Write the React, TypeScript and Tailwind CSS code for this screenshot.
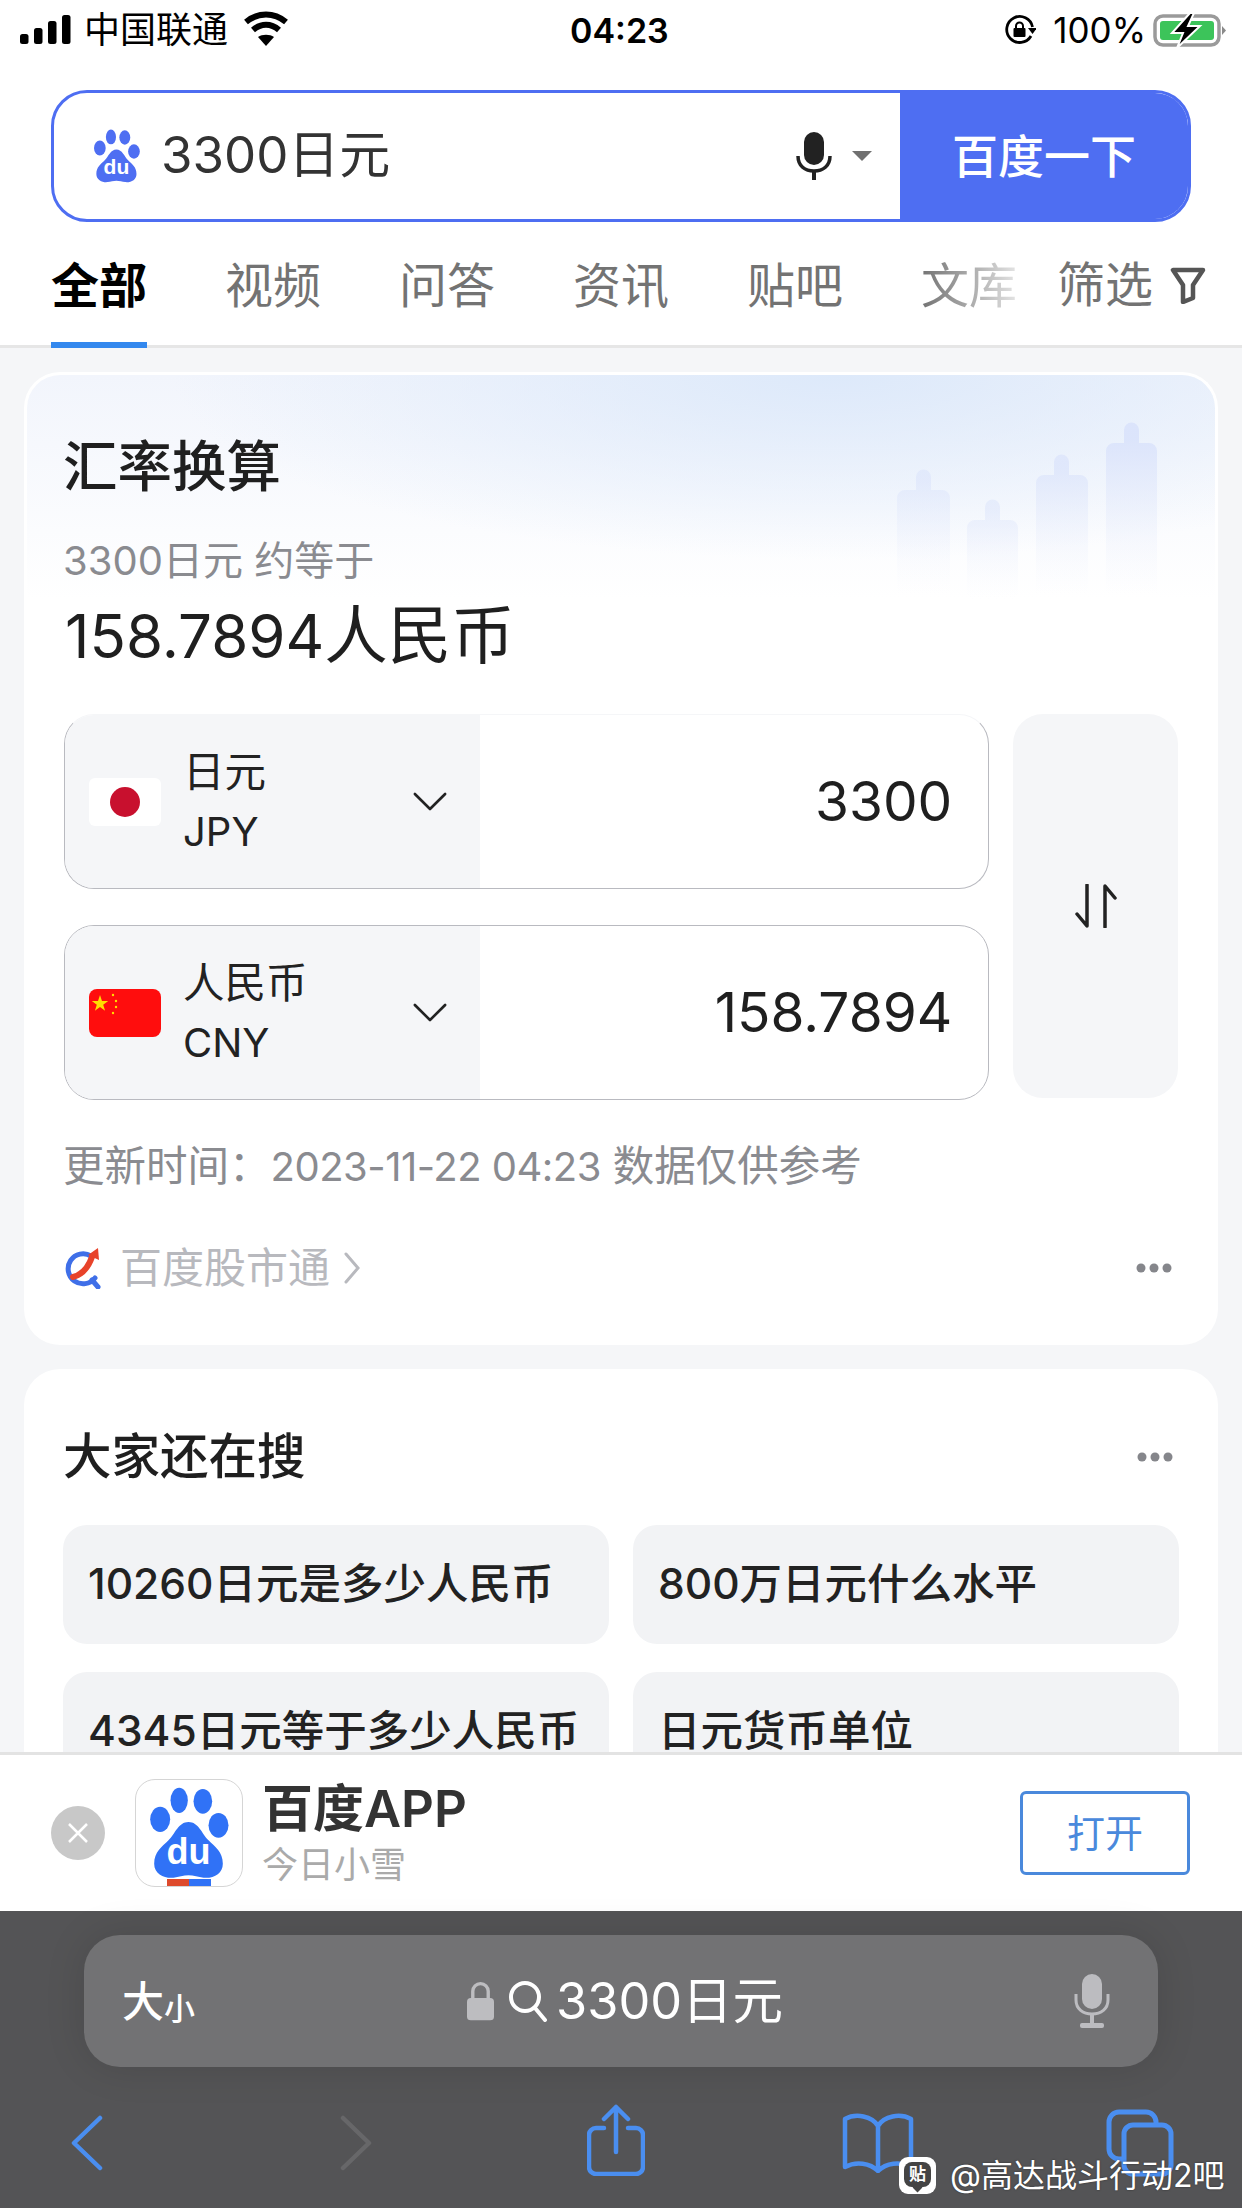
import React from "react";

function Paw({ className, textColor = "#fff" }: { className?: string; textColor?: string }) {
  return (
    <svg viewBox="0 0 236 276" className={className}>
      <g fill="currentColor">
        <ellipse cx="87" cy="40" rx="26" ry="38" />
        <ellipse cx="158" cy="43" rx="28" ry="37" />
        <ellipse cx="30" cy="97" rx="30" ry="38" />
        <ellipse cx="205" cy="115" rx="30" ry="37" />
        <path d="M115 105C85 105 75 140 55 160C35 180 12 195 12 230C12 262 45 275 70 272C85 270 100 265 115 265C130 265 145 270 160 272C190 275 218 260 218 230C218 195 195 180 175 160C155 140 145 105 115 105Z" />
      </g>
      <text x="115" y="232" textAnchor="middle" fontFamily="'Liberation Sans',sans-serif" fontWeight="700" fontSize="108" fill={textColor}>du</text>
    </svg>
  );
}

function Chevron({ className }: { className?: string }) {
  return (
    <svg viewBox="0 0 36 20" className={className} fill="none" stroke="currentColor" strokeWidth="2.800" strokeLinecap="round" strokeLinejoin="round">
      <path d="M2 2l16 16L34 2" />
    </svg>
  );
}

function Dots({ className }: { className?: string }) {
  return (
    <svg viewBox="0 0 36 10" className={`w-[36px] h-[10px] ${className ?? ""}`} fill="#85868b">
      <circle cx="5" cy="5" r="4.500" />
      <circle cx="18" cy="5" r="4.500" />
      <circle cx="31" cy="5" r="4.500" />
    </svg>
  );
}

function StatusBar() {
  return (
    <div className="h-[60px] shrink-0 flex items-center justify-between pl-[20px] pr-[15px] relative text-black">
      <div className="flex items-center">
        <svg viewBox="0 0 52 30" className="w-[52px] h-[30px]" fill="#000">
          <rect x="0" y="19" width="8.500" height="10" rx="2.500" />
          <rect x="14" y="13" width="8.500" height="16" rx="2.500" />
          <rect x="28" y="6" width="8.500" height="23" rx="2.500" />
          <rect x="42" y="0" width="8.500" height="29" rx="2.500" />
        </svg>
        <span className="text-[36px] leading-none ml-[12px]">中国联通</span>
        <svg viewBox="0 0 46 36" className="w-[46px] h-[36px] ml-[15px] -mt-[2px]" fill="none" stroke="#000" strokeWidth="6">
          <path d="M3 11c12-10 28-10 40 0" />
          <path d="M10 19c8-7 18-7 26 0" />
          <path d="M23 35l-8-9c4-3 12-3 16 0z" fill="#000" strokeWidth="0" />
        </svg>
      </div>
      <span className="absolute left-[570px] top-[13px] text-[34px] leading-[36px] font-semibold">04:23</span>
      <div className="flex items-center">
        <svg viewBox="0 0 32 32" className="w-[32px] h-[32px] -translate-x-[2px]" fill="none" stroke="#000" strokeWidth="2.800">
          <path d="M27 22A13 13 0 1 1 28.500 13" />
          <path d="M24 14h9l-4.500 6z" fill="#000" strokeWidth="0" />
          <rect x="9.500" y="14" width="12" height="9" rx="1" fill="#000" strokeWidth="0" />
          <path d="M12 14v-2a3.500 3.500 0 0 1 7 0v2" strokeWidth="2" />
        </svg>
        <span className="text-[35px] leading-none ml-[15px]">100%</span>
        <svg viewBox="0 0 74 36" className="w-[74px] h-[36px] ml-[7px]">
          <rect x="2" y="4" width="64" height="29" rx="8" fill="none" stroke="#9a9a9a" strokeWidth="3.500" />
          <rect x="7" y="9" width="54" height="19" rx="3" fill="#3cc45a" />
          <path d="M69 14l4 4.500-4 4.500z" fill="#8a8a8a" />
          <path d="M37 1L19 21h11L24 36l23-22H35l6-13z" fill="#000" stroke="#fff" strokeWidth="2" />
        </svg>
      </div>
    </div>
  );
}

function SearchBox() {
  return (
    <div className="mt-[30px] mx-[51px] h-[132px] shrink-0 flex rounded-[36px] border-[3px] border-[#4e6ef2] overflow-hidden bg-white">
      <div className="flex-1 flex items-center pl-[40px] pr-[28px]">
        <Paw className="w-[46px] h-[54px] text-[#4e6ef2]" />
        <span className="ml-[21px] text-[51px] leading-none text-[#333] -translate-y-[2px]">3300日元</span>
        <div className="ml-auto flex items-center">
          <svg viewBox="0 0 36 48" className="w-[36px] h-[48px] -translate-x-[3px]">
            <rect x="8" y="0" width="20" height="33" rx="10" fill="#222" />
            <path d="M2 24c0 10 7 15 16 15s16-5 16-15" fill="none" stroke="#222" strokeWidth="3.500" />
            <rect x="16" y="38" width="4" height="10" fill="#222" />
          </svg>
          <svg viewBox="0 0 20 10" className="w-[20px] h-[10px] ml-[17px]" fill="#707070">
            <path d="M0 0h20L10 10z" />
          </svg>
        </div>
      </div>
      <div className="w-[288px] bg-[#4e6ef2] flex items-center justify-center text-white text-[46px] font-medium leading-none">百度一下</div>
    </div>
  );
}

function Tabs() {
  const tabs = ["视频", "问答", "资讯", "贴吧"];
  return (
    <div className="h-[126px] shrink-0 bg-white relative border-b-[3px] border-[#e6e6e6] flex items-start pl-[51px] pt-[31px] text-[48px] leading-[66px] text-[#737373]">
      <div className="w-[96px] relative h-[92px] text-black font-bold text-center">
        全部
        <div className="absolute left-0 right-0 bottom-0 h-[6px] bg-[#3388ee] translate-y-[3px]" />
      </div>
      <div className="flex gap-[78px] ml-[78px]">
        {tabs.map((t) => (
          <span key={t} className="w-[96px] text-center">{t}</span>
        ))}
        <span className="w-[96px] text-center bg-gradient-to-r from-[#737373] to-[#e4e4e4] bg-clip-text text-transparent">文库</span>
      </div>
      <div className="absolute right-[36px] top-[30px] flex items-center bg-white">
        <span>筛选</span>
        <svg viewBox="0 0 36 38" className="w-[36px] h-[38px] ml-[17px]" fill="none" stroke="#555" strokeWidth="4.500" strokeLinejoin="round">
          <path d="M3 4h30L23 19v13l-10 4V19z" />
        </svg>
      </div>
    </div>
  );
}

function CurrencyRow({ flag, name, code, value, first }: { flag: React.ReactNode; name: string; code: string; value: string; first?: boolean }) {
  return (
    <div className={`h-[175px] flex rounded-[30px] border border-[#b9bac0] overflow-hidden bg-white ${first ? "border-t-[#f5f6f8]" : ""}`}>
      <div className="w-[415px] bg-[#f5f6f8] flex items-center pl-[24px] pr-[30px]">
        {flag}
        <div className="ml-[22px] text-[41.500px] leading-[60px] text-[#222] flex flex-col">
          <span>{name}</span>
          <span className="text-[40px]">{code}</span>
        </div>
        <Chevron className="w-[34px] h-[19px] ml-auto -translate-x-[3px] text-[#222]" />
      </div>
      <div className="flex-1 flex items-center justify-end pr-[36px] text-[55px] leading-none text-[#1f1f1f]">{value}</div>
    </div>
  );
}

function RateCard() {
  return (
    <div className="relative mx-[24px] mt-[24px] h-[973px] shrink-0 rounded-[36px] bg-white border-t-[3px] border-x-[3px] border-white overflow-hidden">
      <div className="absolute inset-x-0 top-0 h-[225px] bg-[radial-gradient(ellipse_at_68%_0%,#dde9fa_0%,rgba(224,234,250,0)_58%),linear-gradient(180deg,#f2f5fc_0%,#ffffff_100%)]" />
      <svg viewBox="0 0 290 225" className="absolute top-0 left-[870px] w-[290px] h-[225px]">
        <defs>
          <linearGradient id="candle" x1="0" y1="0" x2="0" y2="1">
            <stop offset="0.1" stopColor="#d9e2fb" stopOpacity="0.95" />
            <stop offset="1" stopColor="#f0f3fc" stopOpacity="0" />
          </linearGradient>
        </defs>
        <g fill="url(#candle)">
          <path opacity="0.55" d="M19 102a7.500 7.500 0 0 1 15 0v13h11a8 8 0 0 1 8 8v97H0v-97a8 8 0 0 1 8-8h11z" />
          <path opacity="0.5" d="M88 132a7.500 7.500 0 0 1 15 0v13h10a8 8 0 0 1 8 8v72H70v-72a8 8 0 0 1 8-8h10z" />
          <path opacity="0.7" d="M157 87a7.500 7.500 0 0 1 15 0v13h11a8 8 0 0 1 8 8v112h-52V108a8 8 0 0 1 8-8h10z" />
          <path opacity="0.9" d="M227 55a7.500 7.500 0 0 1 15 0v13h10a8 8 0 0 1 8 8v144h-51V76a8 8 0 0 1 8-8h10z" />
        </g>
      </svg>
      <div className="relative px-[37px]">
        <div className="pt-[56px] text-[54.500px] leading-[70px] font-medium text-[#1f1f1f] -ml-[1px]">汇率换算</div>
        <div className="mt-[33px] text-[40px] leading-[54px] text-[#8a8b90] -ml-[1px]">3300日元 约等于</div>
        <div className="mt-[7px] text-[60px] leading-[80px] text-[#1f1f1f] ml-[1px]">
          158.7894<span className="text-[63.500px]">人民币</span>
        </div>
        <div className="mt-[38px] flex gap-[24px]">
          <div className="w-[927px] flex flex-col gap-[36px]">
            <CurrencyRow
              first
              name="日元"
              code="JPY"
              value="3300"
              flag={
                <div className="w-[72px] h-[48px] rounded-[6px] bg-white flex items-center justify-center">
                  <div className="w-[30px] h-[30px] rounded-full bg-[#c8102e]" />
                </div>
              }
            />
            <CurrencyRow
              name="人民币"
              code="CNY"
              value="158.7894"
              flag={
                <svg viewBox="0 0 72 48" className="w-[72px] h-[48px] rounded-[8px]">
                  <rect width="72" height="48" fill="#ff0d0d" />
                  <path d="M11 6l2 6h6.200l-5 3.800 1.900 6-5.100-3.700-5.100 3.700 1.900-6-5-3.800H9z" fill="#ffde00" />
                  <g fill="#ffde00">
                    <circle cx="24" cy="6" r="1.200" />
                    <circle cx="27" cy="12" r="1.200" />
                    <circle cx="27" cy="18" r="1.200" />
                    <circle cx="24" cy="24" r="1.200" />
                  </g>
                </svg>
              }
            />
          </div>
          <div className="w-[165px] h-[384px] rounded-[30px] bg-[#f5f6f8] flex items-center justify-center">
            <svg viewBox="0 0 42 44" className="w-[42px] h-[44px]" fill="none" stroke="#222" strokeWidth="3.500" strokeLinecap="round" strokeLinejoin="round">
              <path d="M12 1v41L2 30" />
              <path d="M30 43V2l10 12" />
            </svg>
          </div>
        </div>
        <div className="mt-[38px] text-[41.500px] leading-[56px] text-[#8a8b90] -ml-[1px]">
          更新时间：<span className="text-[40px] tracking-[-0.5px]">2023-11-22 04:23</span> 数据仅供参考
        </div>
        <div className="mt-[44px] flex items-center h-[58px]">
          <svg viewBox="0 0 40 42" className="w-[40px] h-[42px]" fill="none">
            <path d="M27 9a15 15 0 1 0 4 22" stroke="#3f6fe8" strokeWidth="5" strokeLinecap="round" />
            <path d="M28 33l6 7" stroke="#3f6fe8" strokeWidth="5" strokeLinecap="round" />
            <path d="M9 30c8-2 15-9 19-20" stroke="#e8432a" strokeWidth="6" strokeLinecap="round" />
            <path d="M24 8l10-7 1 12z" fill="#e8432a" />
          </svg>
          <span className="ml-[16px] text-[42px] leading-none text-[#b8b9be]">百度股市通</span>
          <svg viewBox="0 0 16 32" className="w-[16px] h-[32px] ml-[14px]" fill="none" stroke="#b8b9be" strokeWidth="3" strokeLinecap="round">
            <path d="M2 2l12 14L2 30" />
          </svg>
          <Dots className="ml-auto mr-[6px]" />
        </div>
      </div>
    </div>
  );
}

function Chip({ text }: { text: string }) {
  return (
    <div className="h-[119px] rounded-[24px] bg-[#f2f3f5] pl-[25px] flex items-center text-[42.500px] leading-none font-medium text-[#222]">{text}</div>
  );
}

function RelatedCard() {
  return (
    <div className="mx-[24px] mt-[24px] shrink-0 rounded-[36px] bg-white px-[39px] pt-[54px] pb-[40px]">
      <div className="flex items-center justify-between h-[68px]">
        <span className="text-[48.500px] leading-none font-medium text-[#1f1f1f]">大家还在搜</span>
        <Dots className="mr-[6px]" />
      </div>
      <div className="mt-[34px] grid grid-cols-2 gap-x-[24px] gap-y-[28px]">
        <Chip text="10260日元是多少人民币" />
        <Chip text="800万日元什么水平" />
        <Chip text="4345日元等于多少人民币" />
        <Chip text="日元货币单位" />
      </div>
    </div>
  );
}

function AppBanner() {
  return (
    <div className="h-[159px] shrink-0 bg-white border-t-[3px] border-[#e3e3e3] flex items-center pl-[51px] pr-[52px]">
      <div className="w-[54px] h-[54px] rounded-full bg-[#c8c8c8] flex items-center justify-center">
        <svg viewBox="0 0 24 24" className="w-[24px] h-[24px]" fill="none" stroke="#fff" strokeWidth="2.500">
          <path d="M3 3l18 18M21 3L3 21" />
        </svg>
      </div>
      <div className="ml-[30px] w-[108px] h-[108px] rounded-[20px] border border-[#d5d5d5] bg-white relative flex justify-center pt-[7px] overflow-hidden">
        <Paw className="w-[79px] h-[92px] text-[#3072f6]" />
        <div className="absolute bottom-0 left-[31px] flex h-[7px]">
          <div className="w-[22px] bg-[#de4a2c]" />
          <div className="w-[22px] bg-[#3072f6]" />
        </div>
      </div>
      <div className="ml-[19px] flex flex-col">
        <span className="text-[51px] leading-[60px] font-semibold text-[#333]">百度APP</span>
        <span className="text-[36px] leading-[48px] text-[#aaaaaa] translate-y-[2px]">今日小雪</span>
      </div>
      <div className="ml-auto w-[170px] h-[84px] rounded-[6px] border-[3px] border-[#4a89dc] flex items-center justify-center text-[38px] text-[#4a89dc]">打开</div>
    </div>
  );
}

function BrowserBar() {
  return (
    <div className="h-[297px] shrink-0 bg-[#545456] relative">
      <div className="mx-[84px] mt-[24px] h-[132px] rounded-[36px] bg-[#727274] flex items-center pl-[38px] pr-[48px] relative shadow-[0_0_40px_rgba(0,0,0,0.12)]">
        <span className="text-white text-[42px] font-medium leading-none mt-[2px]">大</span>
        <span className="text-white text-[31px] font-medium leading-none mt-[14px]">小</span>
        <div className="flex items-center absolute left-[383px] top-[41px]">
          <svg viewBox="0 0 28 40" className="w-[27px] h-[40px]" fill="#bdbdc0">
            <rect x="0" y="17" width="28" height="23" rx="4" />
            <path d="M6 18v-8a8 8 0 0 1 16 0v8" fill="none" stroke="#bdbdc0" strokeWidth="3.500" />
          </svg>
          <svg viewBox="0 0 40 42" className="w-[40px] h-[42px] ml-[14px]" fill="none" stroke="#fff" strokeWidth="4" strokeLinecap="round">
            <circle cx="17" cy="17" r="14" />
            <path d="M27 28l10 12" />
          </svg>
          <span className="ml-[8px] text-white text-[50.500px] leading-none">3300日元</span>
        </div>
        <svg viewBox="0 0 36 54" className="w-[36px] h-[54px] ml-auto">
          <rect x="8" y="0" width="20" height="35" rx="10" fill="#bcbcc0" />
          <path d="M2 20v6c0 9 7 14 16 14s16-5 16-14v-6" fill="none" stroke="#bcbcc0" strokeWidth="3" />
          <rect x="16" y="39" width="4" height="11" fill="#bcbcc0" />
          <rect x="6" y="49" width="24" height="5" rx="2" fill="#bcbcc0" />
        </svg>
      </div>
      <div className="mt-[37px] h-[76px] flex items-start pl-[71px]">
        <svg viewBox="0 0 32 56" className="w-[32px] h-[56px] mt-[11px]" fill="none" stroke="#4a8ef0" strokeWidth="4.500" strokeLinecap="round" strokeLinejoin="round">
          <path d="M29 3L3 28l26 25" />
        </svg>
        <svg viewBox="0 0 32 56" className="w-[32px] h-[56px] mt-[11px] ml-[237px]" fill="none" stroke="#676769" strokeWidth="4.500" strokeLinecap="round" strokeLinejoin="round">
          <path d="M3 3l26 25L3 53" />
        </svg>
        <svg viewBox="0 0 58 72" className="w-[58px] h-[72px] ml-[215px]" fill="none" stroke="#4a8ef0" strokeWidth="4.500" strokeLinecap="round" strokeLinejoin="round">
          <path d="M17 24H9a7 7 0 0 0-7 7v32a7 7 0 0 0 7 7h40a7 7 0 0 0 7-7V31a7 7 0 0 0-7-7h-8" />
          <path d="M29 48V3M17 15L29 3l12 12" />
        </svg>
        <svg viewBox="0 0 72 60" className="w-[72px] h-[60px] ml-[197px] mt-[9px]" fill="none" stroke="#4a8ef0" strokeWidth="4.500" strokeLinecap="round" strokeLinejoin="round">
          <path d="M36 13C30 3 14 0 3 6v48c11-6 25-4 33 4 8-8 22-10 33-4V6C58 0 42 3 36 13zM36 13v45" />
        </svg>
        <svg viewBox="0 0 68 68" className="w-[68px] h-[68px] mt-[5px] ml-[192px]" fill="none" stroke="#4a8ef0" strokeWidth="5" strokeLinejoin="round">
          <path d="M50 16v-3a10 10 0 0 0-10-10H13A10 10 0 0 0 3 13v27a10 10 0 0 0 10 10h5" />
          <rect x="18" y="16" width="47" height="49" rx="9" />
        </svg>
      </div>
      <div className="absolute left-[899px] top-[246px] flex items-center">
        <div className="w-[37px] h-[37px] rounded-[9px] bg-white flex items-center justify-center relative">
          <div className="w-[27px] h-[25px] rounded-[8px] bg-[#444] flex items-center justify-center text-[17px] font-bold leading-none text-white -mt-[2px]">贴</div>
          <div className="absolute left-[15px] bottom-[3px] w-[7px] h-[7px] bg-[#444] rotate-45" />
        </div>
        <span className="ml-[14px] text-[32px] leading-none text-white [text-shadow:0_0_2px_rgba(0,0,0,0.5)]">@高达战斗行动2吧</span>
      </div>
    </div>
  );
}

export default function App() {
  return (
    <div className="w-[1242px] h-[2208px] flex flex-col overflow-hidden bg-white font-['Inter','Noto_Sans_CJK_SC',sans-serif]">
      <StatusBar />
      <SearchBox />
      <Tabs />
      <div className="flex-1 min-h-0 overflow-hidden bg-[#f5f6f8] flex flex-col">
        <RateCard />
        <RelatedCard />
      </div>
      <AppBanner />
      <BrowserBar />
    </div>
  );
}
